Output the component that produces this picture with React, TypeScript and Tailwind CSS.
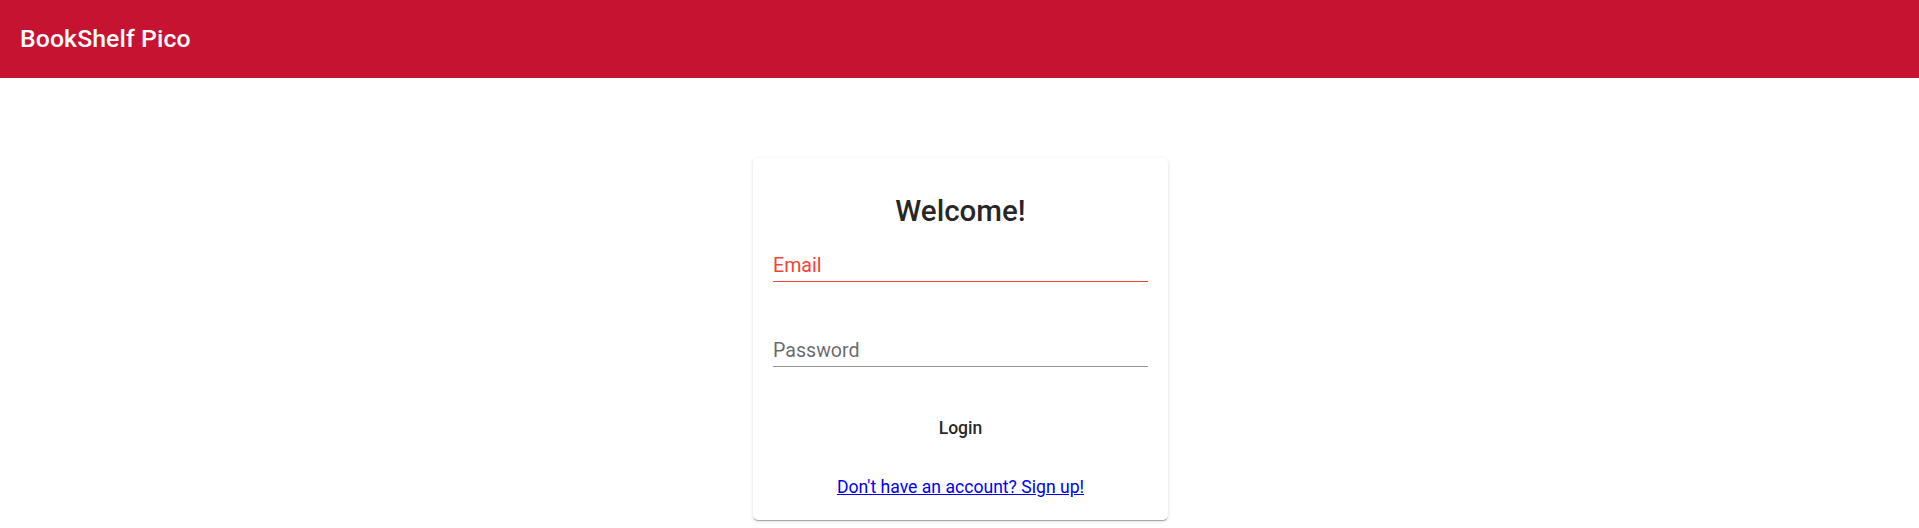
export default function App() {
  return (
    <div className="min-h-[528px] bg-white" style={{ fontFamily: 'Roboto, "Liberation Sans", sans-serif' }}>
      <header className="h-[78px] bg-[#c51331] flex items-center px-[20px]">
        <h1 className="text-white text-[24.8px] font-medium leading-none tracking-[0.1px]">BookShelf Pico</h1>
      </header>

      <main className="flex justify-center pt-[80px] pl-[2px]">
        <div className="w-[415px] bg-white rounded-[5px] px-[20px] pt-[33px] pb-[20px] shadow-[0_2px_1px_-1px_rgba(0,0,0,0.2),0_1px_1px_0_rgba(0,0,0,0.14),0_1px_4px_0_rgba(0,0,0,0.12)]">
          <h2 className="text-center text-[29.5px] font-medium leading-[40px] text-[rgba(0,0,0,0.87)]">Welcome!</h2>

          <div className="mt-[23px] border-b border-[#f44336] pb-[4px]">
            <span className="block text-[19.6px] leading-[23px] text-[#f44336]">Email</span>
          </div>

          <div className="mt-[57px] border-b border-[#949494] pb-[4px]">
            <span className="block text-[19.6px] leading-[23px] text-[rgba(0,0,0,0.6)]">Password</span>
          </div>

          <div className="mt-[49px] flex justify-center">
            <button className="text-[17.6px] font-medium leading-[24px] text-[rgba(0,0,0,0.87)]">Login</button>
          </div>

          <div className="mt-[36px] text-center">
            <a href="#" className="text-[17.6px] leading-[23px] text-[#0000ee] underline">Don't have an account? Sign up!</a>
          </div>
        </div>
      </main>
    </div>
  );
}
